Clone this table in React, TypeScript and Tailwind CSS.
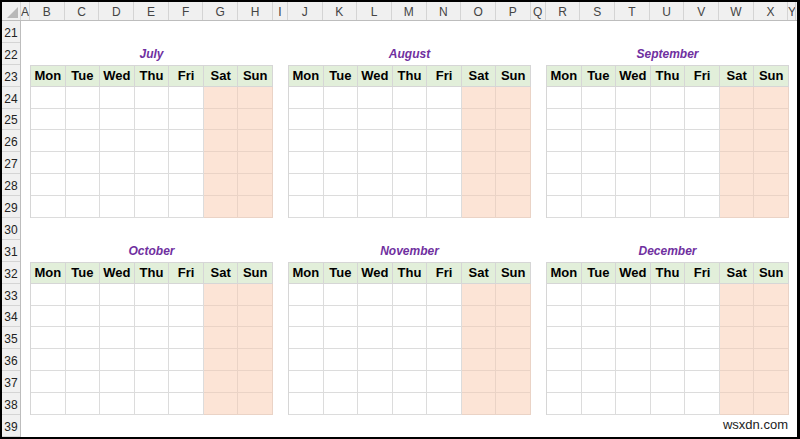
const COLS_1 = ['B', 'C', 'D', 'E', 'F', 'G', 'H'];
const COLS_2 = ['J', 'K', 'L', 'M', 'N', 'O', 'P'];
const COLS_3 = ['R', 'S', 'T', 'U', 'V', 'W', 'X'];
const DAYS = ['Mon', 'Tue', 'Wed', 'Thu', 'Fri', 'Sat', 'Sun'];
const ROWS = Array.from({ length: 19 }, (_, i) => 21 + i);

function ColLetter({ label, w }: { label: string; w: string }) {
  return (
    <div className={`${w} flex-none flex items-center justify-center pt-[2px] border-r border-[#d4d4d4] text-[12px] text-[#444] overflow-hidden`}>
      {label}
    </div>
  );
}

function MonthTable({ name }: { name: string }) {
  return (
    <div className="w-[243px] flex-none flex flex-col">
      {/* title row */}
      <div className="h-[21.9px] flex items-center justify-center text-[12px] font-bold italic text-[#7030a0]">
        {name}
      </div>
      {/* day names */}
      <div className="h-[21.9px] grid grid-cols-7 border-l border-t border-[#d6d6d6] bg-[#e2efda]">
        {DAYS.map((d) => (
          <div key={d} className="flex items-center justify-center border-r border-b border-[#d6d6d6] text-[13px] font-bold text-black">
            {d}
          </div>
        ))}
      </div>
      {/* empty weeks */}
      {Array.from({ length: 6 }, (_, r) => (
        <div key={r} className="h-[21.9px] grid grid-cols-7 border-l border-[#d6d6d6]">
          {DAYS.map((d, i) => (
            <div
              key={d}
              className={i >= 5 ? 'border-r border-b border-[#ead3c6] bg-[#fce4d6]' : 'border-r border-b border-[#dcdcdc] bg-white'}
            />
          ))}
        </div>
      ))}
    </div>
  );
}

function Block({ months }: { months: string[] }) {
  return (
    <div className="flex">
      <div className="w-[9px] flex-none" />
      <MonthTable name={months[0]} />
      <div className="w-[15px] flex-none" />
      <MonthTable name={months[1]} />
      <div className="w-[15px] flex-none" />
      <MonthTable name={months[2]} />
    </div>
  );
}

export default function App() {
  return (
    <div className="relative w-[800px] h-[439px] overflow-hidden bg-white border-t-2 border-l-2 border-b-2 border-r-[3px] border-black font-['Liberation_Sans',Arial,sans-serif]">
      {/* column letters */}
      <div className="flex h-[19px] bg-[#f0f0f0] border-b border-[#bdbdbd]">
        <div className="w-[19px] flex-none relative border-r border-[#d4d4d4]">
          <svg className="absolute right-[2px] bottom-[2px]" width="11" height="11" viewBox="0 0 11 11">
            <polygon points="11,0 11,11 0,11" fill="#b8b8b8" />
          </svg>
        </div>
        <ColLetter label="A" w="w-[9px]" />
        {COLS_1.map((c) => <ColLetter key={c} label={c} w="w-[34.7px]" />)}
        <ColLetter label="I" w="w-[15px]" />
        {COLS_2.map((c) => <ColLetter key={c} label={c} w="w-[34.7px]" />)}
        <ColLetter label="Q" w="w-[15px]" />
        {COLS_3.map((c) => <ColLetter key={c} label={c} w="w-[34.7px]" />)}
        <ColLetter label="Y" w="w-[8px]" />
      </div>

      <div className="flex">
        {/* row numbers */}
        <div className="w-[19px] flex-none bg-[#f0f0f0] border-r border-[#bdbdbd]">
          {ROWS.map((n) => (
            <div key={n} className="h-[21.9px] flex items-end justify-center pb-[2px] border-b border-[#d4d4d4] text-[12px] leading-[14px] text-[#222]">
              {n}
            </div>
          ))}
        </div>

        {/* sheet */}
        <div className="flex-1 flex flex-col">
          <div className="h-[21.9px]" />
          <Block months={['July', 'August', 'September']} />
          <div className="h-[21.9px]" />
          <Block months={['October', 'November', 'December']} />
          <div className="h-[21.9px]" />
        </div>
      </div>

      <div className="absolute right-[9px] bottom-[3px] text-[13px] text-[#222]">wsxdn.com</div>
    </div>
  );
}
